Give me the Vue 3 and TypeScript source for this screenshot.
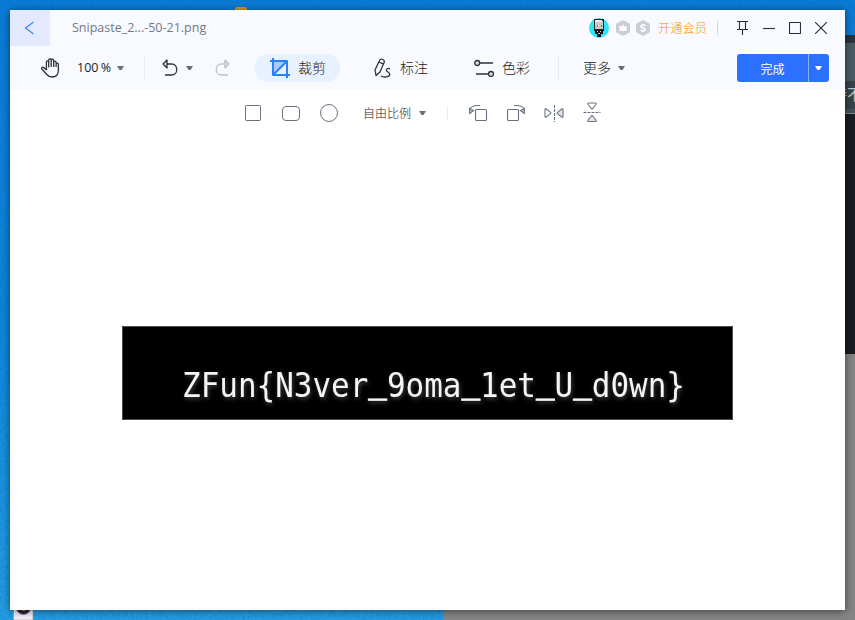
<script setup lang="ts">
import { computed, ref } from 'vue'

const fileName = ref('Snipaste_2...-50-21.png')
const zoom = ref('100 %')
const imageText = 'ZFun{N3ver_9oma_1et_U_d0wn}'

// Underscores sit on the baseline, so each run carries its own vertical shift.
const runs = computed(() => {
  const parts = imageText.split(/(_)/)
  return parts.map((text, i) => ({
    text,
    line: text === '_',
    dy: text === '_' ? -5 : i > 0 ? 5 : 0,
  }))
})
</script>

<template>
  <div class="desktop">
    <svg class="wallpaper" width="855" height="620">
      <defs>
        <linearGradient id="sky" x1="0" y1="0" x2="0" y2="1">
          <stop offset="0" stop-color="#0b7cd8" />
          <stop offset=".5" stop-color="#0f85dc" />
          <stop offset="1" stop-color="#269de3" />
        </linearGradient>
        <filter id="grain" x="0" y="0" width="1" height="1">
          <feTurbulence type="fractalNoise" baseFrequency=".35" numOctaves="2" seed="4" />
          <feColorMatrix values="0 0 0 0 0  0 0 0 0 .15  0 0 0 0 .4  .9 0 0 0 -.34" />
        </filter>
      </defs>
      <rect width="855" height="620" fill="url(#sky)" />
      <rect width="855" height="620" filter="url(#grain)" opacity=".6" />
      <rect x="235" y="7" width="12" height="8" rx="2" fill="#d49c20" />
      <rect x="443" y="354" width="412" height="266" fill="#858585" />
      <rect x="845" y="35" width="10" height="8" fill="#28333b" />
      <rect x="845" y="43" width="10" height="38" fill="#4a5c64" />
      <rect x="845" y="81" width="10" height="28" fill="#35434b" />
      <rect x="845" y="109" width="10" height="4" fill="#44535a" />
      <rect x="845" y="113" width="10" height="1" fill="#7e8b90" />
      <rect x="845" y="114" width="10" height="240" fill="#191c21" />
      <text x="832" y="100" class="behind">持不</text>
      <rect x="13.5" y="560" width="19.500" height="60" fill="#f2eff5" stroke="#8b99a4" stroke-width=".6" />
      <circle cx="23.500" cy="607" r="7.500" fill="#25212d" stroke="#a37bc4" />
      <path d="M22 610h3" stroke="#ddd" />
    </svg>

    <main class="window">
      <header class="titlebar">
        <button class="back" aria-label="返回">
          <svg width="12" height="14" viewBox="0 0 12 14"><path d="M9.500 1 1.500 7l8 6" fill="none" stroke="#3984f5" stroke-width="1.200" /></svg>
        </button>
        <span class="filename">{{ fileName }}</span>
        <div class="account">
          <svg class="avatar" width="20" height="20" viewBox="0 0 20 20">
            <circle cx="10" cy="10" r="10" fill="#2de5f8" />
            <path d="M5 1h10v12H5z" fill="#252426" />
            <path d="M6 3h8v8H6z" fill="#cbcac7" /><path d="M6 2h7v2H6z" fill="#f0eeeb" />
            <path d="M8 7h1v2H8z" fill="#24aeb9" /><path d="M12 7h1v2h-1z" fill="#d43e3e" />
            <path d="M6 12h8v4h-2v3H8v-3H6z" fill="#151719" /><path d="M8 13h1v1H8zm3 0h1v1h-1zM9 15h2v1H9z" fill="#d7d7d7" />
          </svg>
          <svg class="badge" width="14" height="16" viewBox="0 0 14 16">
            <path d="m7 0 6.500 3.500q.5.3.5 1v7q0 .7-.5 1L7 16 .5 12.500q-.5-.3-.5-1v-7q0-.7.5-1z" fill="#c9ced7" />
            <path d="m3 5.500 2 1.500 2-2.500L9 7l2-1.500-.7 5.500H3.700z" fill="#fff" />
          </svg>
          <svg class="badge" width="14" height="16" viewBox="0 0 14 16">
            <path d="m7 0 6.500 3.500q.5.3.5 1v7q0 .7-.5 1L7 16 .5 12.500q-.5-.3-.5-1v-7q0-.7.5-1z" fill="#c9ced7" />
            <path d="M9.300 6C8.500 4.500 4.900 4.500 4.900 6.400c0 1.900 4.400 1.200 4.400 3.200 0 1.900-3.600 1.900-4.600.4" fill="none" stroke="#fff" stroke-width="1.600" />
          </svg>
          <a class="member">开通会员</a>
        </div>
        <i class="rule title-rule"></i>
        <div class="controls">
          <svg width="12" height="15" viewBox="0 0 12 15"><path d="M0 .5h11M2.500.5v8M8.500.5v8M0 8.500h11M5.500 8.500V14" /></svg>
          <svg width="12" height="15" viewBox="0 0 12 15"><path d="M0 7.500h12" /></svg>
          <svg width="12" height="12" viewBox="0 0 12 12"><rect x=".5" y=".5" width="11" height="11" rx=".5" /></svg>
          <svg width="12" height="12" viewBox="0 0 12 12"><path d="m0 0 12 12M12 0 0 12" /></svg>
        </div>
      </header>

      <nav class="toolbar">
        <svg class="hand" width="20" height="20" viewBox="0 0 20 20">
          <path d="M5.400 12V4.400c0-2 2.300-2 2.300 0v5M7.700 9V2.200c0-2 2.500-2 2.500 0V9M10.200 9V2.700c0-2 2.500-2 2.500 0V9M12.700 9V4.500c0-1.900 2.400-1.900 2.400 0V9M15.100 8V6.400c0-1.600 2.300-1.600 2.300 0V12c0 4.500-2.300 7-6.400 7-3 0-4.300-1.300-5.700-3L1 11.200c-.9-1.200.6-2.600 2-1.500L5.400 12" />
        </svg>
        <span class="zoom">{{ zoom }}</span><i class="caret zoom-caret"></i>
        <i class="rule first-rule"></i>
        <svg class="undo" width="16" height="18" viewBox="0 0 16 18"><path d="M5 5h4.500c7 0 7 11 0 11H3" /><path d="M5 1 1 5l4 4z" fill="#d9dbde" /></svg>
        <i class="caret undo-caret"></i>
        <svg class="redo" width="16" height="18" viewBox="0 0 16 18"><path d="M10 5H6.500c-7 0-7 11 0 11H13" /><path d="m10 1 4 4-4 4z" fill="#d9dbde" /></svg>
        <button class="tool crop">
          <svg width="20" height="20" viewBox="0 0 20 20"><path d="M4 4h11L4 15z" fill="#a9cbfb" stroke="none" /><path d="M0 3h17v17M3 0v17h17M17 3 3 17" stroke="#2b80f5" stroke-width="2" /></svg>
          <span>裁剪</span>
        </button>
        <button class="tool mark">
          <svg width="18" height="20" viewBox="0 0 18 20"><path d="M1 12 5.500 2.500c1.500-2.800 6-.6 4.500 2.200L6 14l-4 3.500zM5 4l4.500 2.200M16 11c-1.500-1.600-5 .2-3.200 2.100 1 1 3 1.400 3 3.200 0 3-6 3.400-9 1.700" /></svg>
          <span>标注</span>
        </button>
        <button class="tool color">
          <svg width="22" height="18" viewBox="0 0 22 18"><path d="M6 4h13M2 15h12" /><circle cx="3.200" cy="4" r="2.500" fill="#d5d8df" /><circle cx="17" cy="15" r="2.500" fill="#d5d8df" /></svg>
          <span>色彩</span>
        </button>
        <i class="rule second-rule"></i>
        <span class="more">更多</span><i class="caret more-caret"></i>
        <div class="done"><button>完成</button><button aria-label="更多保存选项"><i class="caret"></i></button></div>
      </nav>

      <section class="options">
        <div class="shapes">
          <svg width="18" height="18" viewBox="0 0 18 18"><rect x="1.500" y="1.500" width="15" height="15" rx=".8" /></svg>
          <svg width="18" height="18" viewBox="0 0 18 18"><rect x=".5" y="2.500" width="17" height="14" rx="3.500" /></svg>
          <svg width="18" height="18" viewBox="0 0 18 18"><circle cx="9" cy="9" r="8.500" /></svg>
        </div>
        <span class="ratio">自由比例</span><i class="caret ratio-caret"></i><i class="rule option-rule"></i>
        <div class="transforms">
          <svg width="20" height="20" viewBox="0 0 20 20"><rect x="7.500" y="6.500" width="11" height="11" rx="1" /><path d="M2 6c1-2.700 4-3.900 10-3.500" /><path d="m1.500 5.500 4 2-3.800 3z" fill="#c3c8d0" /></svg>
          <svg width="20" height="20" viewBox="0 0 20 20"><rect x="1.500" y="6.500" width="11" height="11" rx="1" /><path d="M18 6c-1-2.700-4-3.900-10-3.500" /><path d="m18.500 5.500-4 2 3.800 3z" fill="#c3c8d0" /></svg>
          <svg width="20" height="20" viewBox="0 0 20 20"><path d="M1 6.500q0-1 1-.7l4.500 3.500q.8.700 0 1.400L2 14.200q-1 .3-1-.7z" /><path d="M19 6.500q0-1-1-.7l-4.500 3.500q-.8.700 0 1.400l4.500 3.500q1 .3 1-.7z" fill="#e1e3e8" /><path d="M10.500 2v17" stroke-dasharray="3 1" /></svg>
          <svg width="20" height="22" viewBox="0 0 20 22"><path d="M6.500 1h7q1 0 .7 1l-3.500 4.500q-.7.700-1.400 0L5.800 2q-.3-1 .7-1z" /><path d="M6.500 19.500h7q1 0 .7-1L10.700 14q-.7-.7-1.400 0l-3.500 4.500q-.3 1 .7 1z" fill="#e1e3e8" /><path d="M1.500 10.500h17" stroke-dasharray="3 1" /></svg>
        </div>
      </section>

      <section class="canvas">
        <div class="image">
          <svg width="609" height="92" viewBox="0 0 609 92">
            <text x="59" y="70" textLength="503" lengthAdjust="spacingAndGlyphs"><tspan v-for="(run, i) in runs" :key="i" :dy="run.dy" :class="{ underscore: run.line }">{{ run.text }}</tspan></text>
          </svg>
        </div>
      </section>
    </main>
  </div>
</template>

<style>
body { margin: 0; overflow: hidden; }
</style>

<style scoped>
.desktop { position: relative; box-sizing: border-box; width: 855px; height: 620px; padding: 10px; font-family: "Open Sans", "Noto Sans CJK SC", sans-serif; overflow: hidden; }
.wallpaper { position: absolute; inset: 0; }
.behind { font: 15px "Noto Sans CJK SC", sans-serif; fill: #bfc6c9; }
.window { position: relative; width: 835px; height: 600px; background: #fff; box-shadow: 0 1px 8px #0008; }
button { border: 0; padding: 0; background: none; font-family: inherit; color: inherit; }
svg { display: block; flex: none; }
.titlebar { display: flex; align-items: center; height: 36px; background: #f9faff; }
.back { display: flex; align-items: center; justify-content: center; width: 40px; height: 36px; background: #e4e9ff; }
.filename { width: 150px; margin-left: 22px; font-size: 12.500px; line-height: 18px; color: #727984; white-space: nowrap; }
.account { display: flex; align-items: center; margin-left: 367px; }
.badge { margin-left: 7px; }
.badge + .badge { margin-left: 6px; }
.member { margin-left: 8px; width: 49px; font-family: "Noto Sans CJK SC", sans-serif; font-size: 12.250px; font-weight: 300; line-height: 18px; white-space: nowrap; color: #ff9500; }
.rule { display: block; width: 1px; flex: none; background: #e9ebf1; }
.title-rule { height: 14px; margin-left: 10px; background: #d3d6dc; }
.controls { display: flex; align-items: center; gap: 14px; margin-left: 19px; fill: none; stroke: #292d36; stroke-width: 1.100; }
.toolbar { display: flex; align-items: center; height: 44px; background: #f9faff; color: #1b1e24; fill: none; stroke: #2d323c; stroke-width: 1.300; stroke-linejoin: round; }
.hand { margin-left: 31px; }
.zoom { width: 35px; margin-left: 16px; font-size: 12.500px; line-height: 18px; white-space: nowrap; word-spacing: -1px; }
.caret { display: block; flex: none; width: 7px; height: 4px; background: #6a717e; clip-path: polygon(0 0, 100% 0, 65% 100%, 35% 100%); }
.zoom-caret { margin-left: 5px; }
.first-rule { height: 22px; margin-left: 20px; }
.undo { margin-left: 17px; }
.undo-caret { margin-left: 8px; }
.redo { margin-left: 22px; stroke: #bfc2c8; }
.tool { display: flex; align-items: center; height: 28px; font-family: "Noto Sans CJK SC", sans-serif; font-size: 14px; font-weight: 300; }
.tool span { line-height: 20px; padding-bottom: 2px; }
.crop { width: 86px; margin-left: 23px; border-radius: 14px; background: #e8f1ff; }
.crop svg { margin-left: 16px; }
.crop span { margin-left: 8px; }
.mark { margin-left: 34px; }
.mark span { margin-left: 8px; }
.color { margin-left: 46px; }
.color span { margin-left: 6px; }
.second-rule { height: 24px; margin-left: 28px; }
.more { margin-left: 24px; width: 29px; padding-bottom: 2px; white-space: nowrap; font: 300 14px/20px "Noto Sans CJK SC", sans-serif; }
.more-caret { margin-left: 6px; }
.done { display: flex; width: 92px; height: 28px; margin-left: auto; margin-right: 16px; border-radius: 3px; background: #2b70ff; color: #fff; overflow: hidden; }
.done button:first-child { width: 71px; padding-top: 1px; font: 12px/18px "Noto Sans CJK SC", sans-serif; }
.done button:last-child { display: flex; align-items: center; flex: 1; padding-left: 6px; border-left: 1px solid #8eb2ff; }
.done .caret { background: #fff; }
.options { display: flex; align-items: center; height: 46px; color: #1f222a; }
.shapes { display: flex; gap: 20px; margin-left: 234px; fill: none; stroke: #697180; }
.ratio { width: 49px; margin-left: 25px; white-space: nowrap; font: 300 12px/18px "Noto Sans CJK SC", sans-serif; }
.ratio-caret { margin-left: 7px; }
.option-rule { height: 14px; margin-left: 21px; }
.transforms { display: flex; align-items: center; gap: 18px; margin-left: 20px; fill: none; stroke: #697180; stroke-width: 1.100; }
.canvas { display: flex; justify-content: center; padding-top: 190px; }
.image { width: 609px; height: 92px; border: 1px solid #4b4b4b; background: #000; }
.image text { font-family: "DejaVu Sans Mono", monospace; font-size: 33px; fill: #f5f5f5; filter: drop-shadow(1px 2px 2px #444); }
.underscore { stroke: #f5f5f5; stroke-width: .8; }
</style>
